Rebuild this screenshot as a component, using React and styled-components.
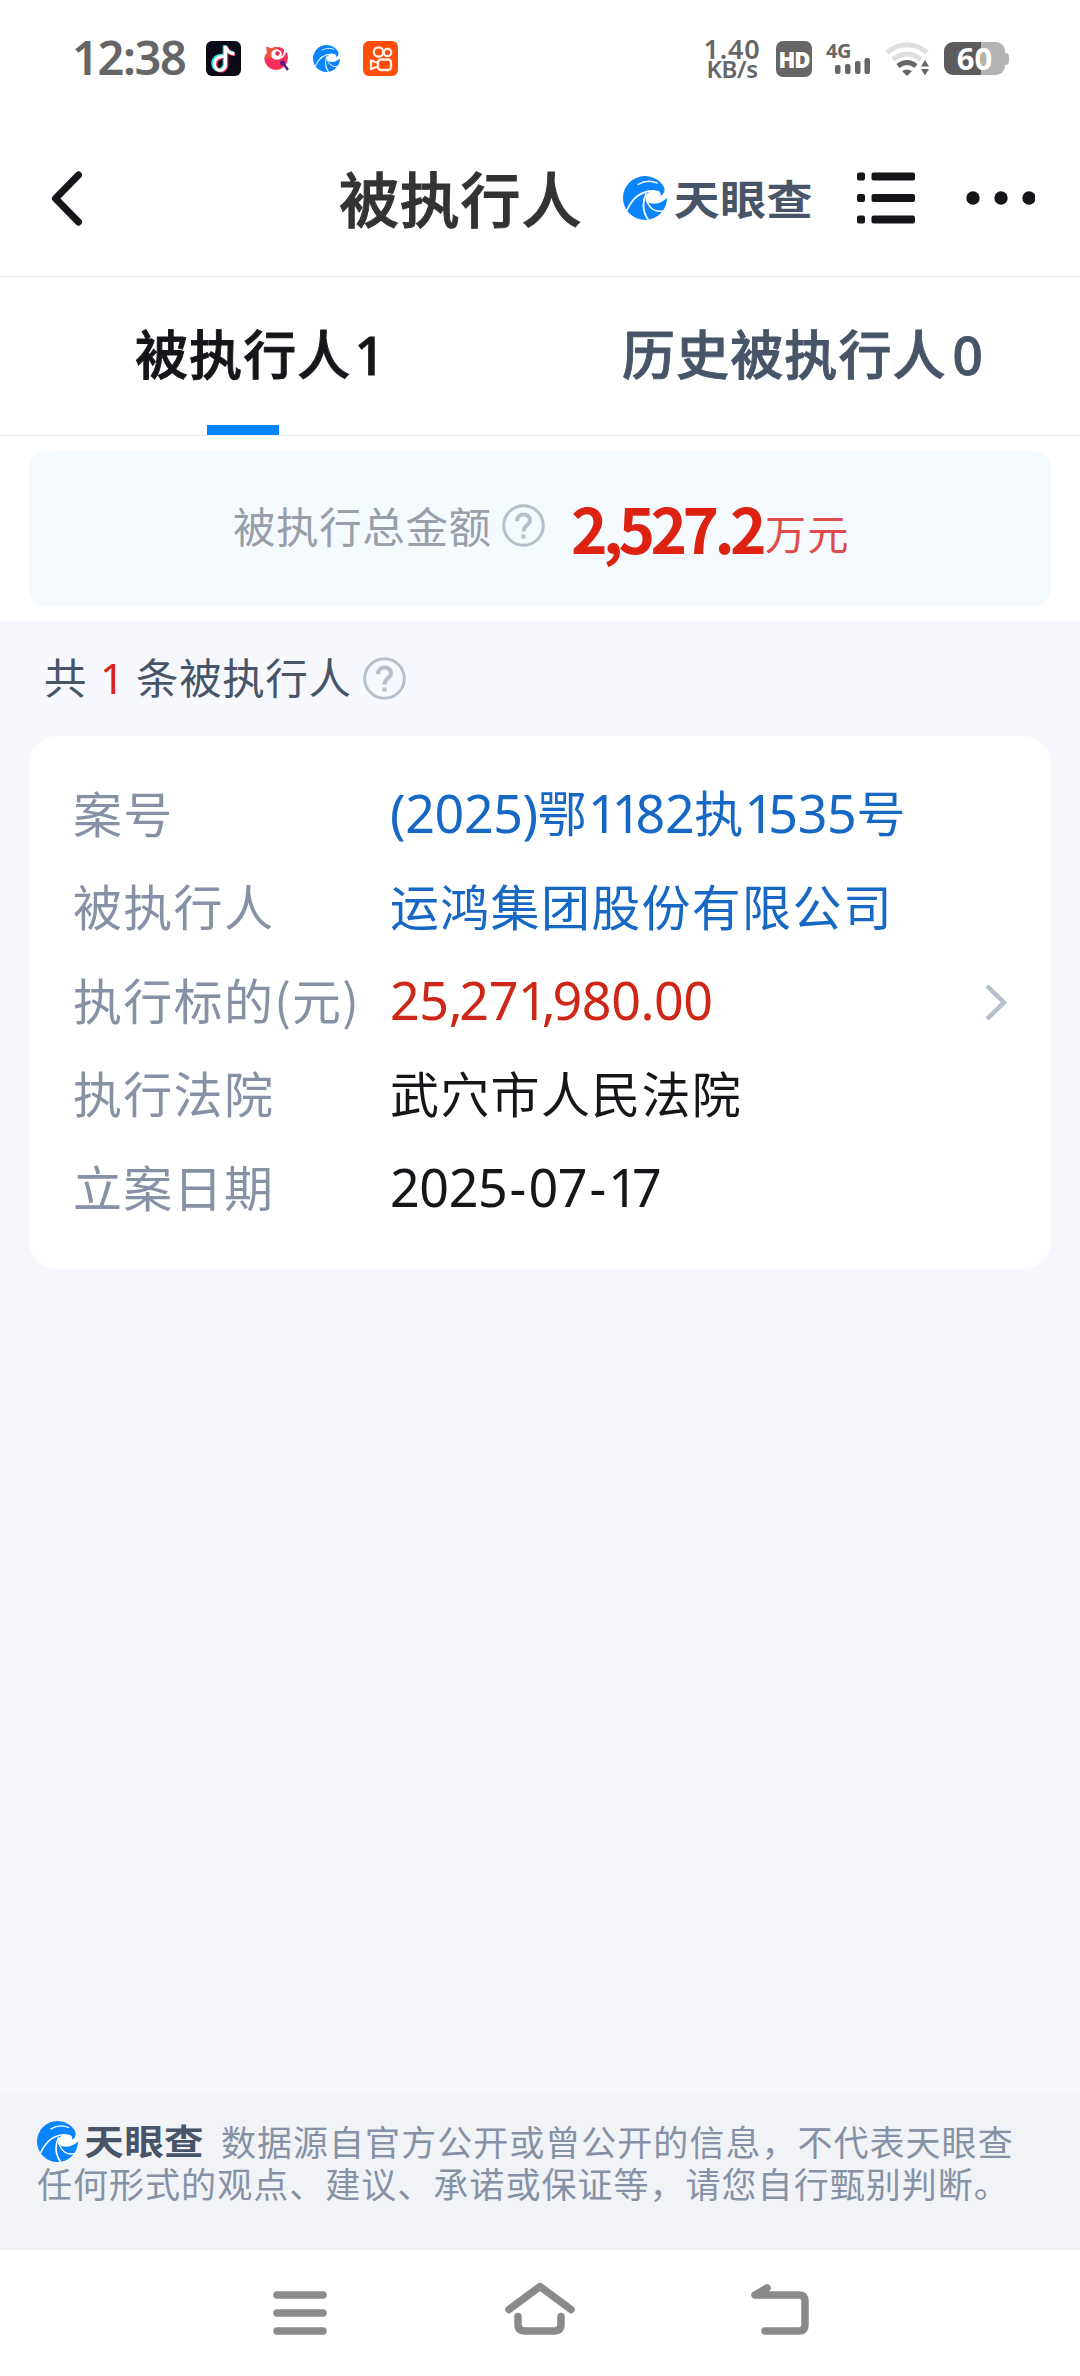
import React from 'react';
import styled, { createGlobalStyle } from 'styled-components';

const GlobalStyle = createGlobalStyle`
  * {
    box-sizing: border-box;
  }

  body {
    margin: 0;
    background: #fff;
    font-family: 'Noto Sans CJK SC', 'Noto Sans', sans-serif;
  }

  svg {
    display: block;
    flex: none;
  }
`;

const records = [
  { label: '案号', value: '(2025)鄂1182执1535号', color: '#1668c4' },
  { label: '被执行人', value: '运鸿集团股份有限公司', color: '#1668c4' },
  { label: '执行标的(元)', value: '25,271,980.00', color: '#cf2717' },
  { label: '执行法院', value: '武穴市人民法院', color: '#14161a' },
  { label: '立案日期', value: '2025-07-17', color: '#14161a' },
];

const Screen = styled.div`
  display: flex;
  flex-direction: column;
  width: 1080px;
  height: 2376px;
  overflow: hidden;
  background: #f6f8fd;
`;

/* status bar */

const StatusBar = styled.div`
  display: flex;
  align-items: center;
  height: 120px;
  padding: 0 71px 3px 72px;
  background: #fff;
  color: #666;
  font-family: 'Noto Sans', sans-serif;
`;

const Clock = styled.div`
  width: 134px;
  padding-bottom: 3px;
  font-size: 47px;
  font-weight: 600;
  line-height: 50px;
  letter-spacing: -1.4px;
  white-space: nowrap;
`;

const AppIcons = styled.div`
  display: flex;
  align-items: center;
  flex: 1;
  gap: 23px;
`;

const Speed = styled.div`
  display: flex;
  flex-direction: column;
  align-items: center;
  width: 56px;
  margin-right: 16px;
  font-size: 24px;
  font-weight: 600;
  line-height: 20px;
  letter-spacing: -0.4px;
  white-space: nowrap;

  span:first-child {
    font-size: 27px;
    letter-spacing: 0.8px;
  }
`;

const HdBadge = styled.div`
  width: 36px;
  height: 36px;
  margin-right: 14px;
  border-radius: 7px;
  background: #666;
  color: #fff;
  font-size: 22px;
  font-weight: 900;
  line-height: 36px;
  text-align: center;
  letter-spacing: -1px;
`;

const Signal = styled.div`
  display: flex;
  flex-direction: column;
  width: 45px;
  margin-right: 14px;
  font-size: 20px;
  font-weight: 700;
  line-height: 15px;
  letter-spacing: -0.5px;

  svg {
    margin: -1px 0 0 9px;
  }
`;

const Battery = styled.div`
  display: flex;
  align-items: center;
  margin-left: 14px;

  &::after {
    content: '';
    width: 4px;
    height: 12px;
    border-radius: 0 4px 4px 0;
    background: #b3b3b3;
  }
`;

const BatteryLevel = styled.div`
  width: 61px;
  height: 33px;
  border-radius: 9px;
  background: linear-gradient(90deg, #5c5c5c 60%, #b3b3b3 60%);
  color: #fff;
  font-size: 31px;
  font-weight: 700;
  line-height: 33px;
  text-align: center;
`;

/* page header */

const Header = styled.div`
  display: flex;
  align-items: center;
  height: 157px;
  padding-left: 51px;
  border-bottom: 1px solid #eee;
  background: #fff;
`;

const Title = styled.h1`
  width: 284px;
  margin: 0 0 0 257px;
  padding-bottom: 3px;
  color: #333;
  font-size: 60px;
  font-weight: 500;
  line-height: 80px;
  letter-spacing: 0.8px;
  white-space: nowrap;
  -webkit-text-stroke: 1px currentColor;
`;

const BrandWrap = styled.span`
  display: inline-flex;
  align-items: center;
  gap: ${(props) => props.$size * 0.155}px;
  width: ${(props) => props.$width}px;
`;

const BrandName = styled.span`
  padding-bottom: 3px;
  color: #485468;
  font-size: ${(props) => props.$size}px;
  font-weight: 700;
  line-height: 1;
  letter-spacing: 0.3px;
  white-space: nowrap;
  transform: scaleY(0.88);
`;

/* tabs */

const Tabs = styled.div`
  display: grid;
  grid-template-columns: 1fr 1fr;
  height: 159px;
  border-bottom: 1px solid #eee;
  background: #fff;
`;

const Tab = styled.div`
  display: flex;
  flex-direction: column;
  justify-content: space-between;
  padding: 37px 0 0 ${(props) => props.$indent}px;
  color: ${(props) => (props.$active ? '#14161a' : '#485468')};
  font-size: 53px;
  font-weight: 500;
  line-height: 76px;
  letter-spacing: 1.1px;
  white-space: nowrap;
  -webkit-text-stroke: 0.9px currentColor;
`;

const Count = styled.span`
  margin-left: ${(props) => props.$gap}px;
  font-family: 'Noto Sans', sans-serif;
  font-weight: 500;
`;

const Indicator = styled.div`
  width: 72px;
  height: 10px;
  margin-left: 72px;
  background: #0084ff;
`;

/* total amount */

const Summary = styled.div`
  height: 185px;
  padding: 15px 29px;
  background: #fff;
`;

const SummaryPanel = styled.div`
  display: flex;
  align-items: center;
  height: 155px;
  padding: 0 0 6px 204px;
  border-radius: 16px;
  background: #f5faff;
  white-space: nowrap;
`;

const SummaryLabel = styled.span`
  width: 269px;
  padding-bottom: 3px;
  color: #999eaa;
  font-size: 42.5px;
  letter-spacing: 0.6px;
`;

const Total = styled.span`
  margin-left: 26px;
  padding-top: 7px;
  color: #dd2211;
  font-size: 62px;
  font-weight: 700;
  line-height: 80px;
  letter-spacing: -4.6px;
`;

const Unit = styled.span`
  margin-left: 3px;
  color: #dd4b4a;
  font-size: 41px;
  font-weight: 400;
  letter-spacing: 1.5px;
  vertical-align: 4px;
`;

/* list */

const ListCount = styled.div`
  display: flex;
  align-items: center;
  height: 115px;
  padding-left: 44px;
  color: #485468;
  font-size: 42.5px;
  line-height: 60px;
  letter-spacing: 0.6px;
  white-space: nowrap;
`;

const CountText = styled.span`
  width: 319px;
  padding-bottom: 4px;
`;

const Highlight = styled.span`
  margin: 0 11px 0 13px;
  color: #dd2211;
  font-family: 'Noto Sans', sans-serif;
`;

const Card = styled.div`
  display: flex;
  align-items: center;
  justify-content: space-between;
  height: 533px;
  margin: 0 29px;
  padding: 0 44px 8px 44px;
  border-radius: 28px;
  background: #fff;

  svg {
    margin-top: 7px;
  }
`;

const Record = styled.div`
  display: grid;
  grid-template-columns: 317px auto;
  align-items: center;
  height: 93.5px;
  font-size: 49px;
  line-height: 70px;
  letter-spacing: 1.3px;
  white-space: nowrap;
`;

const Label = styled.span`
  color: #8791a6;
`;

const Value = styled.span`
  color: ${(props) => props.$color};
`;

const Digits = styled.span`
  font-family: 'Noto Sans', sans-serif;
  font-size: 52px;
  letter-spacing: -0.4px;
  vertical-align: -1px;
`;

const Glyph = styled.span`
  margin: 0 ${(props) => props.$side}px;
  letter-spacing: ${(props) => props.$spacing}px;
`;

/* bottom */

const Disclaimer = styled.div`
  height: 155px;
  margin-top: auto;
  padding: 25px 37px 0;
  background: #f1f3f6;
  color: #8791a6;
  font-size: 35px;
  line-height: 42px;
  letter-spacing: 1.03px;
  white-space: nowrap;
`;

const DisclaimerLine = styled.div`
  display: flex;
  align-items: center;
  height: 42px;
`;

const NavBar = styled.div`
  display: flex;
  align-items: flex-start;
  height: 126px;
  padding: 32px 0 0 273px;
  background: #fff;
`;

const NavIcon = styled.svg`
  width: ${(props) => props.$width}px;
  height: 54px;
  margin-right: ${(props) => props.$gap}px;
  fill: none;
  stroke: #8a8a8a;
  stroke-width: 7.5;
  stroke-linecap: round;
  stroke-linejoin: round;
`;

const Swirl = ({ size }) => (
  <svg width={size} height={size} viewBox="0 0 44 44">
    <circle cx="22" cy="22" r="22" fill="#0a84ff" />
    <path
      d="M31 14.5 C24 15.5 21 20.500 23.5 24.5 C27 29.5 37 29 45 21 V14 L41 10.5 C42.500 14.5 41 18.500 37.5 20 C38.5 16 36 14 31 14.5 Z"
      fill="#fff"
    />
    <g fill="none" stroke="#fff" strokeLinecap="round">
      <path d="M15 8.5 C21 5 28 4.5 34 7" strokeWidth="1.4" />
      <path d="M4 34 C9 23 17 14.5 31 14.8" strokeWidth="1.7" />
      <path d="M23 18 C19 27 20 36 25 43.5" strokeWidth="1.8" />
      <path d="M23.5 24 C26 32 32 36.5 40 35" strokeWidth="1.6" />
    </g>
  </svg>
);

const Brand = ({ size, textSize, width }) => (
  <BrandWrap $size={size} $width={width}>
    <Swirl size={size} />
    <BrandName $size={textSize}>天眼查</BrandName>
  </BrandWrap>
);

const Help = () => (
  <svg width="43" height="43" viewBox="0 0 43 43" fill="none" stroke="#b6bfcc">
    <circle cx="21.5" cy="21.5" r="19.8" strokeWidth="3" />
    <path
      d="M15 17.2 C15 8.2 28 8.4 28 16.4 C28 21 21.5 21.2 21.5 27.5"
      strokeWidth="4"
    />
    <path d="M21.5 30.5 V34.5" strokeWidth="4.2" />
  </svg>
);

// Spacing of the glyphs that are not as wide as a digit
const glyphs = {
  1: { side: 0, spacing: -6 },
  ',': { side: 0, spacing: -3.3 },
  '-': { side: 2.2, spacing: 0 },
};

// Latin digits use a narrower face than the Chinese text around them
const MixedText = ({ text }) =>
  text.split(/([\d.,()-]+)/).map((part, i) => {
    if (!/[\d.,()-]/.test(part)) return part;
    return (
      <Digits key={i}>
        {part.split(/([1,-])/).map((c, j) =>
          glyphs[c] ? (
            <Glyph key={j} $side={glyphs[c].side} $spacing={glyphs[c].spacing}>
              {c}
            </Glyph>
          ) : (
            c
          )
        )}
      </Digits>
    );
  });

const StatusIcons = () => (
  <AppIcons>
    <svg width="35" height="35" viewBox="0 0 35 35">
      <rect width="35" height="35" rx="6" fill="#0b0b18" />
      <g fill="none" strokeWidth="3.6">
        <path d="M17 14.5 C3 14 5 31 15 28.5 Q18.5 27 18.5 23 V4.5 Q20 11 27.5 12" stroke="#25e8e4" />
        <path d="M19 16 C6 15.5 8 32 17 29.5 Q20.5 28 20.5 24 V6 Q22 12.5 29 13.5" stroke="#fb3158" />
        <path d="M18 15.3 C4.5 14.8 6.5 31.5 16 29 Q19.5 27.5 19.5 23.5 V5 Q21 12 28.5 12.8" stroke="#fff" strokeWidth="3.2" />
      </g>
    </svg>
    <svg width="26" height="26" viewBox="0 0 26 26">
      <path d="M2.5 0.5 L7 2.5 Q13 0 18 2 Q24 6 24 12 Q23 22 13 24 Q4 24 1 16 Q-1 10 3 7 Z" fill="#f92f5e" />
      <path d="M3 7 L2.5 0.5 L7 2.5 Q11 0.5 14 1 L7 12 L0.5 13 Z" fill="#f5553f" />
      <circle cx="12.5" cy="8.5" r="5.300" fill="#fff" />
      <circle cx="13.5" cy="7.500" r="2.2" fill="#e5244b" />
      <path d="M21 3 Q21.500 10.500 15 12.5" fill="none" stroke="#fff" strokeWidth="1.7" />
      <circle cx="18.5" cy="17" r="2.500" fill="#5c1480" />
      <path d="M19 17 L24 24" stroke="#5c1480" strokeWidth="2.2" />
    </svg>
    <Swirl size={27} />
    <svg width="35" height="35" viewBox="0 0 35 35">
      <rect width="35" height="35" rx="6" fill="#ff4d0a" />
      <g fill="none" stroke="#fff1e8" strokeWidth="2.3">
        <circle cx="15.5" cy="11" r="4.7" />
        <circle cx="24.5" cy="11.5" r="3.7" />
        <rect x="15" y="18.5" width="13" height="10.5" rx="3" />
        <path d="M15 22 L8 19.5 V28 L15 25.5" strokeLinejoin="round" />
      </g>
    </svg>
  </AppIcons>
);

const App = () => {
  return (
    <Screen>
      <GlobalStyle />
      <StatusBar>
        <Clock>12:38</Clock>
        <StatusIcons />
        <Speed>
          <span>1.40</span>
          <span>KB/s</span>
        </Speed>
        <HdBadge>HD</HdBadge>
        <Signal>
          4G
          <svg width="36" height="17" viewBox="0 0 36 17" fill="#666">
            <rect x="0" y="8" width="5.5" height="9" rx="2" />
            <rect x="10" y="7" width="5.5" height="10" rx="2" />
            <rect x="20" y="4" width="5.5" height="13" rx="2" />
            <rect x="29.5" y="1" width="5.5" height="16" rx="2" />
          </svg>
        </Signal>
        <svg width="45" height="34" viewBox="0 0 45 34" fill="none" strokeWidth="5">
          <path d="M2 10.5 Q22 -5 42 10.5" stroke="#dedede" />
          <path d="M8 17.5 Q22 6.5 36 17.5" stroke="#dedede" />
          <path d="M13 24 Q22 17 31 24" stroke="#666" />
          <path d="M17 29 Q22 26 27 29 L22 34 Z" fill="#666" />
          <path d="M36 24.5 L40 18 L44 24.5 Z M36 27 L40 33.5 L44 27 Z" fill="#666" />
        </svg>
        <Battery>
          <BatteryLevel>60</BatteryLevel>
        </Battery>
      </StatusBar>

      <Header>
        <svg width="31" height="55" viewBox="0 0 31 55" fill="none">
          <path
            d="M27.5 4 L4.5 27.5 L27.5 51"
            stroke="#14161a"
            strokeWidth="7"
            strokeLinecap="round"
            strokeLinejoin="round"
          />
        </svg>
        <Title>被执行人</Title>
        <Brand size={44} textSize={46} width={234} />
        <svg width="58" height="52" viewBox="0 0 58 52" fill="#14161a">
          <rect x="0" y="0.5" width="8" height="8" rx="2" />
          <rect x="14.5" y="0.5" width="43.5" height="8" rx="2" />
          <rect x="0" y="22" width="8" height="8" rx="2" />
          <rect x="14.5" y="22" width="43.5" height="8" rx="2" />
          <rect x="0" y="43.5" width="8" height="8" rx="2" />
          <rect x="14.5" y="43.5" width="43.5" height="8" rx="2" />
        </svg>
        <svg width="120" height="14" viewBox="-51 0 120 14" fill="#14161a">
          <circle cx="7" cy="7" r="6.7" />
          <circle cx="35" cy="7" r="6.7" />
          <circle cx="63" cy="7" r="6.7" />
        </svg>
      </Header>

      <Tabs>
        <Tab $active $indent={135}>
          <div>
            被执行人<Count $gap={3}>1</Count>
          </div>
          <Indicator />
        </Tab>
        <Tab $indent={82}>
          <div>
            历史被执行人<Count $gap={6}>0</Count>
          </div>
        </Tab>
      </Tabs>

      <Summary>
        <SummaryPanel>
          <SummaryLabel>被执行总金额</SummaryLabel>
          <Help />
          <Total>
            2,527.2<Unit>万元</Unit>
          </Total>
        </SummaryPanel>
      </Summary>

      <ListCount>
        <CountText>
          共<Highlight>1</Highlight>条被执行人
        </CountText>
        <Help />
      </ListCount>

      <Card>
        <div>
          {records.map((record) => (
            <Record key={record.label}>
              <Label>{record.label}</Label>
              <Value $color={record.color}>
                <MixedText text={record.value} />
              </Value>
            </Record>
          ))}
        </div>
        <svg width="23" height="37" viewBox="0 0 23 37" fill="none">
          <path d="M3 2 L20 18.5 L3 35" stroke="#b6bfcc" strokeWidth="4.5" />
        </svg>
      </Card>

      <Disclaimer>
        <DisclaimerLine>
          <Brand size={41} textSize={39.5} width={184} />
          数据源自官方公开或曾公开的信息，不代表天眼查
        </DisclaimerLine>
        <DisclaimerLine>
          任何形式的观点、建议、承诺或保证等，请您自行甄别判断。
        </DisclaimerLine>
      </Disclaimer>

      <NavBar>
        <NavIcon $width={54} $gap={178} viewBox="0 0 54 54">
          <path d="M4 13 H50 M4 31 H50 M4 49 H50" />
        </NavIcon>
        <NavIcon $width={70} $gap={176} viewBox="0 0 70 54">
          <path d="M4 27.5 L35 4.5 L66 27.5" />
          <path d="M13 34.5 V42 Q13 49 20 49 H49 Q56 49 56 42 V34.5" />
        </NavIcon>
        <NavIcon $width={58} $gap={0} viewBox="0 0 58 54">
          <path d="M16 6 L4 13 H48 Q54 13 54 19 V43 Q54 49 48 49 H14" />
        </NavIcon>
      </NavBar>
    </Screen>
  );
};

export default App;
